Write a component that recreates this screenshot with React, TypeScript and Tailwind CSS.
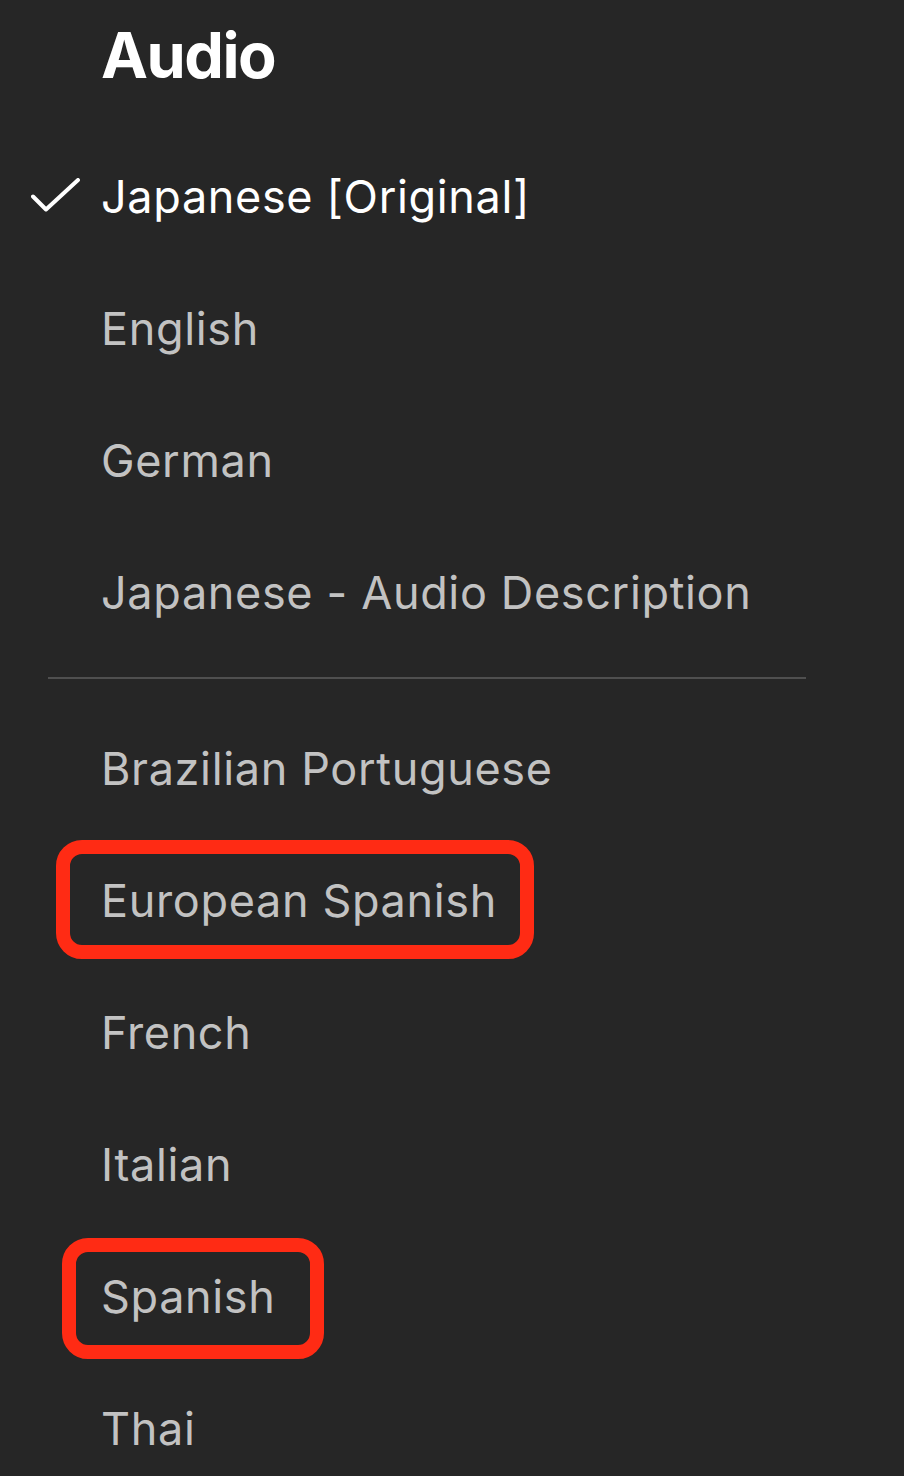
import React from 'react';

interface AudioOption {
  label: string;
  selected?: boolean;
  highlight?: 'wide' | 'narrow';
}

const primary: AudioOption[] = [
  { label: 'Japanese [Original]', selected: true },
  { label: 'English' },
  { label: 'German' },
  { label: 'Japanese - Audio Description' },
];

const others: AudioOption[] = [
  { label: 'Brazilian Portuguese' },
  { label: 'European Spanish', highlight: 'wide' },
  { label: 'French' },
  { label: 'Italian' },
  { label: 'Spanish', highlight: 'narrow' },
  { label: 'Thai' },
];

function Check() {
  return (
    <svg viewBox="0 0 49 36" className="ml-[31px] w-[49px] h-[36px]" fill="none">
      <path
        d="M2 18.5 L15 31.5 L47 2"
        stroke="#ffffff"
        strokeWidth="4"
        strokeLinecap="round"
        strokeLinejoin="round"
      />
    </svg>
  );
}

function OptionRow({ item }: { item: AudioOption }) {
  return (
    <div className="relative flex items-center h-[132px]">
      <div className="w-[101px] shrink-0 flex items-center">{item.selected && <Check />}</div>
      <span
        className={`text-[45px] leading-none tracking-[0.65px] ${
          item.selected ? 'text-white' : 'text-[#c2c2c2]'
        }`}
      >
        {item.label}
      </span>
      {item.highlight === 'wide' && (
        <div className="absolute left-[56px] top-[6px] w-[478px] h-[119px] border-[14px] border-[#ff2b14] rounded-[26px]" />
      )}
      {item.highlight === 'narrow' && (
        <div className="absolute left-[62px] top-[8px] w-[262px] h-[121px] border-[14px] border-[#ff2b14] rounded-[26px]" />
      )}
    </div>
  );
}

export default function App() {
  return (
    <div
      className="w-[904px] h-[1476px] overflow-hidden bg-[#262626]"
      style={{ fontFamily: 'Inter, "Noto Sans", sans-serif' }}
    >
      <div className="flex items-center h-[110px] pl-[101px] mb-[20px]">
        <h1 className="text-[63px] leading-none font-bold text-white tracking-[-1.5px]">Audio</h1>
      </div>

      {primary.map((item) => (
        <OptionRow key={item.label} item={item} />
      ))}

      <div className="ml-[48px] w-[758px] h-[2px] bg-[#4f4f4f] mt-[19px] mb-[23px]" />

      {others.map((item) => (
        <OptionRow key={item.label} item={item} />
      ))}
    </div>
  );
}
